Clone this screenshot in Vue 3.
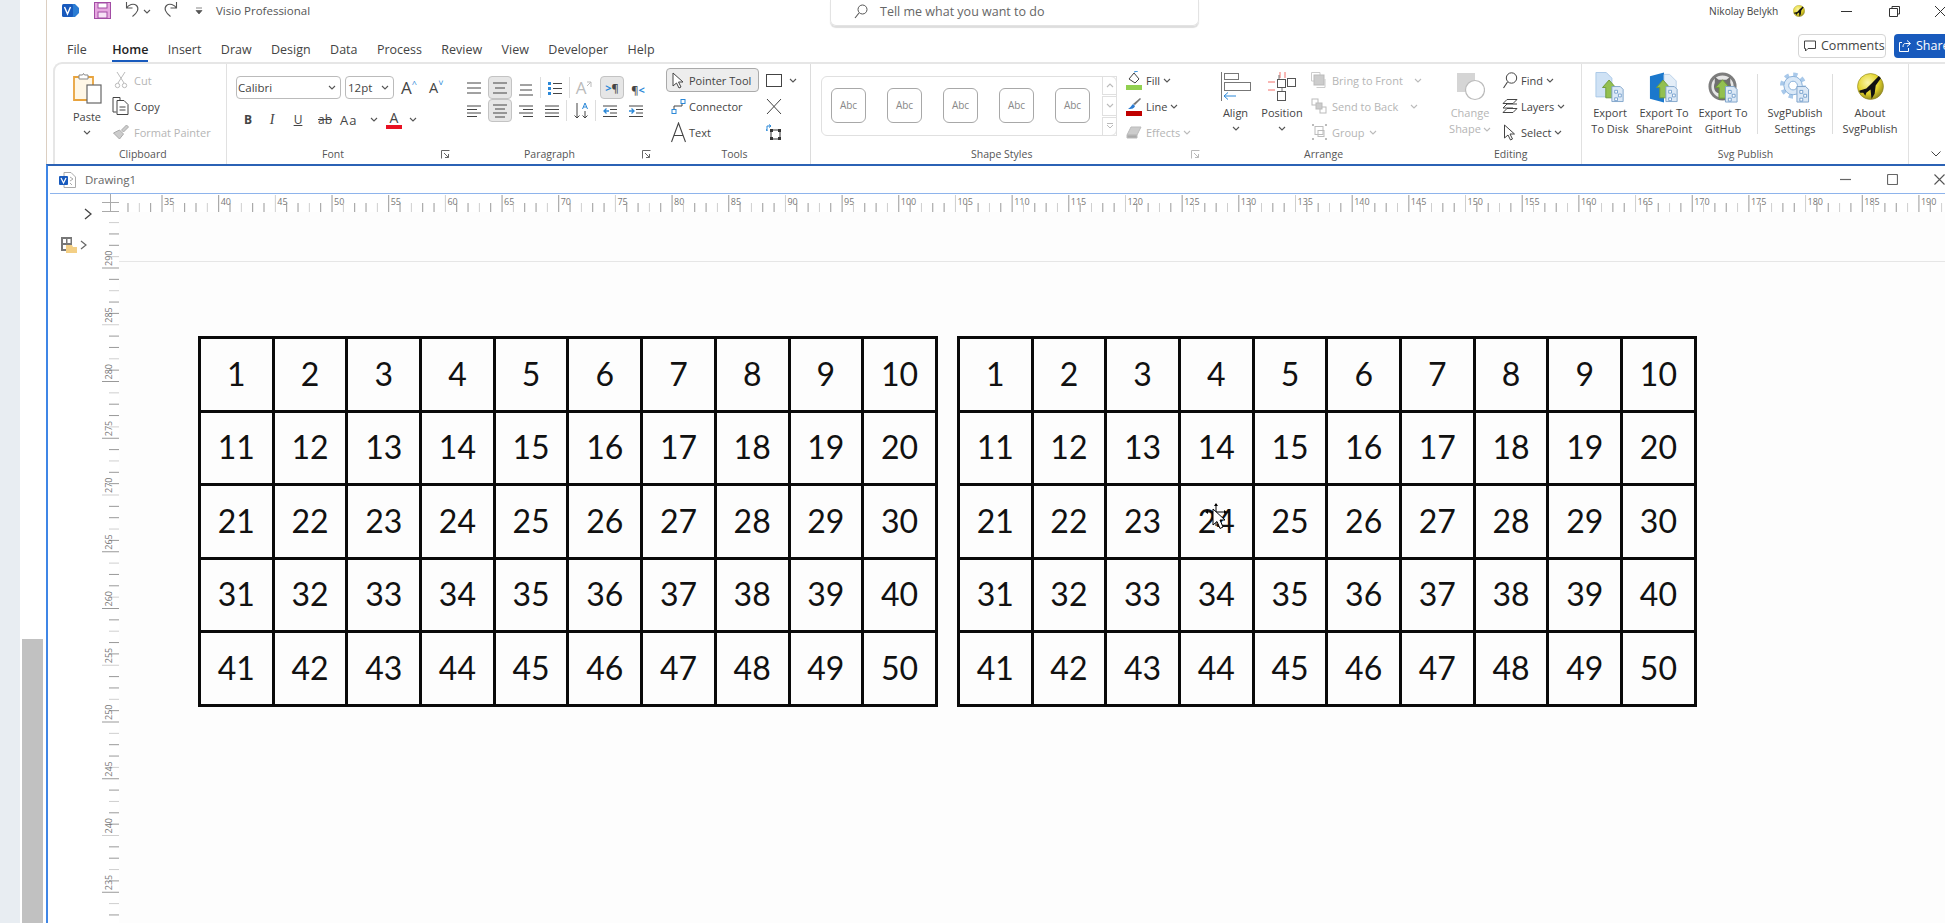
<script setup>
const tabs = ['File', 'Home', 'Insert', 'Draw', 'Design', 'Data', 'Process', 'Review', 'View', 'Developer', 'Help']
const swatches = [1, 2, 3, 4, 5]
const tables = [0, 1]
const rows = [0, 1, 2, 3, 4]
const cols = [1, 2, 3, 4, 5, 6, 7, 8, 9, 10]

const hTicks = []
for (let v = 27; v <= 192; v++) {
  const x = 60 + (v - 35) * 11.335
  if (x >= 17) hTicks.push({ v, x, major: v % 5 === 0, soft: v % 3 === 0 })
}
const vTicks = []
for (let v = 294; v >= 232; v--) {
  const y = 56 + (290 - v) * 11.35
  if (y >= 0) vTicks.push({ v, y, major: v % 5 === 0, soft: v % 3 === 0 })
}

const alignTop = [[1, 3, 15], [1, 8, 15], [1, 13, 15]]
const alignMid = [[1, 3, 15], [3, 8, 13], [1, 13, 15]]
const alignBot = [[2, 5, 14], [2, 10, 14], [1, 15, 15]]
const left = [[1, 3, 15], [1, 6.5, 11], [1, 10, 15], [1, 13.5, 11]]
const center = [[1, 2, 15], [3, 6, 13], [1, 10, 15], [3, 14, 13]]
const right = [[1, 3, 15], [5, 6.5, 15], [1, 10, 15], [5, 13.5, 15]]
const justify = [[1, 3, 15], [1, 6.5, 15], [1, 10, 15], [1, 13.5, 15]]
</script>

<template>
  <div class="screen">
    <svg class="defs" width="0" height="0" aria-hidden="true">
      <defs>
        <radialGradient id="ball" cx="40%" cy="35%" r="70%">
          <stop offset="0" stop-color="#fbf6a8" />
          <stop offset=".6" stop-color="#e2d32a" />
          <stop offset="1" stop-color="#8d8420" />
        </radialGradient>
        <symbol id="chev" viewBox="0 0 8 5"><path d="M1 1l3 3 3-3" fill="none" stroke="#555" stroke-width="1.1" /></symbol>
        <symbol id="chevg" viewBox="0 0 8 5"><path d="M1 1l3 3 3-3" fill="none" stroke="#bbb" stroke-width="1.1" /></symbol>
        <symbol id="launch" viewBox="0 0 9 9"><path d="M.5 8.500v-8h8M3 3l4.500 4.500M7.500 4v3.500H4" fill="none" stroke="#666" /></symbol>
        <symbol id="arrowdoc" viewBox="0 0 32 32">
          <path d="M8 16l7-8 7 8h-3.500v11h-7V16z" fill="#93c050" stroke="#6f9a3a" />
          <path d="M18 15h9l3 3v13H18z" fill="#dbe8f6" stroke="#7fa3c9" />
          <path d="M21 19h3v3h-3zM25 23h3v3h-3zM21 27h3v3h-3z" fill="#fff" stroke="#5c8fc4" stroke-width=".8" />
        </symbol>
        <symbol id="plane" viewBox="0 0 26 26">
          <circle cx="13" cy="13" r="12.500" fill="url(#ball)" stroke="#8d8420" stroke-width=".6" />
          <path d="M2 17l7-2 5-5 7-7 2 2-5 7-1 8-3 5-1-9-4 3-1 3-2-3-3 0z" fill="#111" />
        </symbol>
      </defs>
    </svg>

    <aside class="rail">
      <div class="strip"></div>
      <div class="track"><div class="thumb"></div></div>
    </aside>

    <main class="main">
      <section class="top">
        <header class="titlebar">
          <svg class="logo" width="17" height="15" viewBox="0 0 17 15">
            <path d="M8 1h5l4 4v5l-4 4H8z" fill="#2b7cd3" />
            <rect y="1" width="11" height="13" rx="1.500" fill="#185abd" />
            <path d="M2.500 4l3 7 3-7" fill="none" stroke="#fff" stroke-width="1.400" />
          </svg>
          <svg class="save" width="17" height="17" viewBox="0 0 17 17">
            <rect x=".5" y=".5" width="16" height="16" fill="#e6a8e0" stroke="#a24da4" />
            <rect x="4" y="1" width="9" height="5" fill="#fff" stroke="#a24da4" />
            <rect x="4" y="10" width="9" height="6" fill="#f7e3f6" stroke="#a24da4" />
          </svg>
          <svg class="undo" width="16" height="17" viewBox="0 0 16 17">
            <path d="M1.500 1v6h6M1.500 7c2-3.500 7-5 10-2.500 3 3 1 7-4 11" fill="none" stroke="#555" stroke-width="1.100" />
          </svg>
          <svg class="chev" width="8" height="5"><use href="#chev" /></svg>
          <svg class="redo" width="16" height="17" viewBox="0 0 16 17">
            <path d="M14.500 1v6h-6M14.500 7c-2-3.500-7-5-10-2.500-3 3-1 7 4 11" fill="none" stroke="#555" stroke-width="1.100" />
          </svg>
          <svg class="qat" width="8" height="8" viewBox="0 0 8 8">
            <path d="M1 1h6M1 3.500h6l-3 3.500z" fill="#555" stroke="#555" stroke-width=".7" />
          </svg>
          <span class="apptitle">Visio Professional</span>
          <div class="tellme">
            <svg width="14" height="15" viewBox="0 0 14 15">
              <circle cx="8.500" cy="5.500" r="4.500" fill="none" stroke="#555" />
              <path d="M5 9l-4 5" stroke="#555" stroke-width="1.100" />
            </svg>
            <span>Tell me what you want to do</span>
          </div>
          <span class="username">Nikolay Belykh</span>
          <svg class="avatar" width="12" height="12"><use href="#plane" /></svg>
          <svg class="win-a" width="11" height="11" viewBox="0 0 11 11"><path d="M0 5.500h11" stroke="#333" /></svg>
          <svg class="win-b" width="11" height="11" viewBox="0 0 11 11">
            <path d="M3 2V.5h7.500V8H9M.5 2.500h8v8h-8z" fill="none" stroke="#333" />
          </svg>
          <svg class="win-c" width="11" height="11" viewBox="0 0 11 11"><path d="M0 0l11 11M11 0L0 11" stroke="#333" /></svg>
        </header>

        <nav class="tabbar">
          <span v-for="t in tabs" :key="t" class="tab" :class="{ on: t === 'Home' }">{{ t }}</span>
          <div class="tab-actions">
            <button class="comments">
              <svg width="12" height="12" viewBox="0 0 12 12"><path d="M.5 1h11v7.500H4L1.500 11V8.500h-1z" fill="none" stroke="#444" /></svg>
              Comments
            </button>
            <button class="share">
              <svg width="12" height="12" viewBox="0 0 12 12">
                <path d="M8 .5l3.500 3L8 6.500M11 3.500H6.500C4.500 3.500 4 5 4 7M3 2.500H.5v9h9V8" fill="none" stroke="#fff" />
              </svg>
              Share
            </button>
          </div>
        </nav>

        <div class="ribbon">
          <!-- Clipboard -->
          <section class="group clip">
            <div class="body">
              <div class="paste">
                <svg width="29" height="31" viewBox="0 0 29 31">
                  <path d="M1 4h19v23H1z" fill="#fff7e6" stroke="#e8a33d" stroke-width="1.800" />
                  <path d="M6 2h3.500l1-1.500 1 1.500H15v4H6z" fill="#fff" stroke="#888" />
                  <rect x="14" y="12" width="14" height="18" fill="#fff" stroke="#666" stroke-width="1.200" />
                </svg>
                <span class="pastetxt">Paste</span>
                <svg class="chev" width="8" height="5"><use href="#chev" /></svg>
              </div>
              <div class="stack">
                <div class="row dim">
                  <svg width="14" height="18" viewBox="0 0 14 18">
                    <path d="M3 1l7 11M11 1L4 12" stroke="#bbb" fill="none" />
                    <circle cx="3.500" cy="14.500" r="2.200" fill="none" stroke="#bbb" />
                    <circle cx="10.500" cy="14.500" r="2.200" fill="none" stroke="#bbb" />
                  </svg>
                  <span class="mlc">Cut</span>
                </div>
                <div class="row">
                  <svg width="17" height="18" viewBox="0 0 17 18">
                    <path d="M4 15H.5V.5h7V3" fill="none" stroke="#444" />
                    <path d="M4.500 3.500h7l4 4v10h-11z" fill="#fff" stroke="#444" />
                    <path d="M7 10h6M7 13h6" stroke="#444" />
                  </svg>
                  <span class="mlc">Copy</span>
                </div>
                <div class="row dim">
                  <svg width="17" height="16" viewBox="0 0 17 16">
                    <path d="M7 6l4 4-4 5-6-6z" fill="#ccc" stroke="#aaa" />
                    <path d="M9 6l5-5 2 2-5 5z" fill="#ccc" stroke="#aaa" />
                  </svg>
                  <span class="mlc">Format Painter</span>
                </div>
              </div>
            </div>
            <div class="glabel"><span>Clipboard</span></div>
          </section>

          <!-- Font -->
          <section class="group font">
            <div class="body fcol">
              <div class="frow one">
                <div class="select w1"><span>Calibri</span><svg class="chev" width="8" height="5"><use href="#chev" /></svg></div>
                <div class="select w2"><span>12pt</span><svg class="chev" width="8" height="5"><use href="#chev" /></svg></div>
                <span class="grow">A<sup>^</sup></span>
                <span class="shrink">A<sup>˅</sup></span>
              </div>
              <div class="frow two">
                <b class="ft">B</b>
                <i class="ft ser">I</i>
                <u class="ft">U</u>
                <s class="ft">ab</s>
                <span class="case">Aa</span>
                <svg class="chev" width="8" height="5"><use href="#chev" /></svg>
                <span class="color">A</span>
                <svg class="chev" width="8" height="5"><use href="#chev" /></svg>
              </div>
            </div>
            <div class="glabel"><span>Font</span><svg class="launch" width="9" height="9"><use href="#launch" /></svg></div>
          </section>

          <!-- Paragraph -->
          <section class="group para">
            <div class="body fcol">
              <div class="frow pr1">
                <span class="slot"><svg width="16" height="16"><path v-for="l in alignTop" :key="l[1]" :d="`M${l[0]} ${l[1]}H${l[2]}`" stroke="#444" /></svg></span>
                <span class="slot act"><svg width="16" height="16"><path v-for="l in alignMid" :key="l[1]" :d="`M${l[0]} ${l[1]}H${l[2]}`" stroke="#444" /></svg></span>
                <span class="slot"><svg width="16" height="18"><path v-for="l in alignBot" :key="l[1]" :d="`M${l[0]} ${l[1]}H${l[2]}`" stroke="#444" /></svg></span>
                <i class="vd"></i>
                <span class="slot">
                  <svg width="16" height="16" viewBox="0 0 16 16">
                    <path d="M1 2h3v3H1zM1 7h3v3H1zM1 12h3v3H1z" fill="#2b88d8" />
                    <path d="M6 3.500h9M6 8.500h9M6 13.500h9" stroke="#444" />
                  </svg>
                </span>
                <i class="vd"></i>
                <span class="slot fade">A<svg width="6" height="8" viewBox="0 0 6 8"><path d="M1 1h4v5M5 1L1 5" fill="none" stroke="#bbb" /></svg></span>
                <span class="slot act shift pil"><em>&gt;</em>¶</span>
                <span class="slot pil"><span>¶</span><em>&lt;</em></span>
              </div>
              <div class="frow pr2">
                <span class="slot"><svg width="16" height="16"><path v-for="l in left" :key="l[1]" :d="`M${l[0]} ${l[1]}H${l[2]}`" stroke="#444" /></svg></span>
                <span class="slot act"><svg width="16" height="16"><path v-for="l in center" :key="l[1]" :d="`M${l[0]} ${l[1]}H${l[2]}`" stroke="#444" /></svg></span>
                <span class="slot"><svg width="16" height="16"><path v-for="l in right" :key="l[1]" :d="`M${l[0]} ${l[1]}H${l[2]}`" stroke="#444" /></svg></span>
                <span class="slot"><svg width="16" height="16"><path v-for="l in justify" :key="l[1]" :d="`M${l[0]} ${l[1]}H${l[2]}`" stroke="#444" /></svg></span>
                <i class="vd"></i>
                <span class="slot">
                  <svg width="16" height="18" viewBox="0 0 16 18">
                    <path d="M4 1v15M1.500 13.500L4 16l2.500-2.500M12 9v7M9.500 13.500L12 16l2.500-2.500" fill="none" stroke="#444" />
                    <path d="M9.500 7l2.500-6 2.500 6M10.300 5h3.400" fill="none" stroke="#2b88d8" />
                  </svg>
                </span>
                <i class="vd"></i>
                <span class="slot">
                  <svg width="16" height="16" viewBox="0 0 16 16">
                    <path d="M1 3h14M8 6.500h7M8 10h7M1 13.500h14" stroke="#444" />
                    <path d="M7 8H2M4.500 5.500L2 8l2.500 2.500" fill="none" stroke="#2b88d8" stroke-width="1.300" />
                  </svg>
                </span>
                <span class="slot">
                  <svg width="16" height="16" viewBox="0 0 16 16">
                    <path d="M1 3h14M8 6.500h7M8 10h7M1 13.500h14" stroke="#444" />
                    <path d="M1 8h5M3.500 5.500L6 8l-2.500 2.500" fill="none" stroke="#2b88d8" stroke-width="1.300" />
                  </svg>
                </span>
              </div>
            </div>
            <div class="glabel"><span>Paragraph</span><svg class="launch" width="9" height="9"><use href="#launch" /></svg></div>
          </section>

          <!-- Tools -->
          <section class="group tools">
            <div class="body">
              <div class="stack">
                <div class="row pointer">
                  <svg width="13" height="17" viewBox="0 0 13 17">
                    <path d="M1 1v13l3.500-3 2.500 5 2-1-2.500-5H11z" fill="#fff" stroke="#444" />
                  </svg>
                  <span>Pointer Tool</span>
                </div>
                <div class="row tool">
                  <svg width="15" height="15" viewBox="0 0 15 15">
                    <path d="M3 11V7h8V3" fill="none" stroke="#444" />
                    <rect x="1" y="10.500" width="4" height="4" fill="#fff" stroke="#2b88d8" />
                    <rect x="10" y=".5" width="4" height="4" fill="#fff" stroke="#2b88d8" />
                  </svg>
                  <span>Connector</span>
                </div>
                <div class="row tool">
                  <svg width="15" height="21" viewBox="0 0 15 21"><path d="M.5 20L7.500 1l7 19M3 13.500h9" fill="none" stroke="#444" stroke-width="1.100" /></svg>
                  <span>Text</span>
                </div>
              </div>
              <div class="stack tools2">
                <div class="row">
                  <svg width="16" height="13" viewBox="0 0 16 13"><rect x=".5" y=".5" width="15" height="12" fill="#fff" stroke="#444" /></svg>
                  <svg class="chev rectchev" width="8" height="5"><use href="#chev" /></svg>
                </div>
                <div class="row">
                  <svg width="16" height="17" viewBox="0 0 16 17"><path d="M1 1l14 15M15 1L1 16" stroke="#444" /></svg>
                </div>
                <div class="row">
                  <svg width="16" height="16" viewBox="0 0 16 16">
                    <rect x="5" y="6" width="9" height="9" fill="none" stroke="#333" />
                    <path d="M4 5h3v3H4zM12 5h3v3h-3zM4 13h3v3H4zM12 13h3v3h-3z" fill="#333" />
                    <path d="M1 7V2h4M3 .5L5 2 3 3.500M1 7l-1-2" fill="none" stroke="#2b88d8" />
                  </svg>
                </div>
              </div>
            </div>
            <div class="glabel"><span>Tools</span></div>
          </section>

          <!-- Shape Styles -->
          <section class="group shapes">
            <div class="body">
              <div class="gallery">
                <div v-for="s in swatches" :key="s" class="swatch">Abc</div>
                <div class="gscroll">
                  <span><svg width="8" height="5"><use href="#chevg" transform="rotate(180 4 2.500)" /></svg></span>
                  <span><svg width="8" height="5"><use href="#chevg" /></svg></span>
                  <span><svg width="8" height="6" viewBox="0 0 8 6"><path d="M1 .5h6M1 2l3 3 3-3" fill="none" stroke="#bbb" /></svg></span>
                </div>
              </div>
              <div class="stack fills">
                <div class="row">
                  <svg width="16" height="19" viewBox="0 0 16 19">
                    <path d="M3 8l5-6 5 6-4 4z" fill="#fff" stroke="#444" />
                    <path d="M8 1l4-1" stroke="#2b88d8" />
                    <rect y="14" width="16" height="5" fill="#92d050" />
                  </svg>
                  <span>Fill</span>
                  <svg class="chev" width="8" height="5"><use href="#chev" /></svg>
                </div>
                <div class="row">
                  <svg width="16" height="19" viewBox="0 0 16 19">
                    <path d="M14 1l1 1-6 6-2-1z" fill="#777" />
                    <path d="M7 7l2 2c-1 3-4 3-7 3 2-1 3-3 5-5z" fill="#2b7cd3" />
                    <rect y="14" width="16" height="5" fill="#c00000" />
                  </svg>
                  <span>Line</span>
                  <svg class="chev" width="8" height="5"><use href="#chev" /></svg>
                </div>
                <div class="row dim">
                  <svg width="16" height="15" viewBox="0 0 16 15">
                    <path d="M1 10l4-8h10l-4 8z" fill="#ccc" stroke="#bbb" />
                    <path d="M1 10h10v3H1z" fill="#aaa" stroke="#bbb" />
                  </svg>
                  <span>Effects</span>
                  <svg class="chev" width="8" height="5"><use href="#chevg" /></svg>
                </div>
              </div>
            </div>
            <div class="glabel"><span>Shape Styles</span><svg class="launch soft" width="9" height="9"><use href="#launch" /></svg></div>
          </section>

          <!-- Arrange -->
          <section class="group arrange">
            <div class="body">
              <div class="large alignb">
                <svg width="30" height="29" viewBox="0 0 30 29">
                  <path d="M.5 0v29" stroke="#777" />
                  <rect x="3.500" y="1.500" width="14" height="6" fill="#fff" stroke="#777" />
                  <rect x="3.500" y="10.500" width="26" height="8" fill="#fff" stroke="#777" />
                  <path d="M15 24H3M7 20.500L3 24l4 3.500" fill="none" stroke="#2b88d8" />
                </svg>
                <span class="ll">Align</span>
                <svg class="chev" width="8" height="5"><use href="#chev" /></svg>
              </div>
              <div class="large posb">
                <svg width="29" height="29" viewBox="0 0 29 29">
                  <path d="M12 0v6M17 0v6M0 10h7M0 18h7" stroke="#f3706a" />
                  <path d="M11 10V3M14 16v4" stroke="#777" />
                  <rect x="9.500" y="7.500" width="8" height="8" fill="#fff" stroke="#555" />
                  <rect x="19.500" y="6.500" width="8" height="8" fill="#fff" stroke="#555" />
                  <rect x="9.500" y="19.500" width="8" height="9" fill="#fff" stroke="#555" />
                </svg>
                <span class="ll">Position</span>
                <svg class="chev" width="8" height="5"><use href="#chev" /></svg>
              </div>
              <div class="stack arr">
                <div class="row dim">
                  <svg width="17" height="16" viewBox="0 0 17 16">
                    <path d="M3 9H.5V.5H9V3M14 7v8.500H5.500" fill="none" stroke="#ccc" />
                    <rect x="3" y="3" width="10" height="10" fill="#ccc" stroke="#bbb" />
                  </svg>
                  <span>Bring to Front</span>
                  <svg class="chev bf" width="8" height="5"><use href="#chevg" /></svg>
                </div>
                <div class="row dim">
                  <svg width="17" height="16" viewBox="0 0 17 16">
                    <rect x="1" y="1" width="6" height="6" fill="none" stroke="#bbb" />
                    <rect x="9" y="9" width="6" height="6" fill="none" stroke="#bbb" />
                    <rect x="5" y="5" width="6" height="6" fill="#ccc" stroke="#bbb" />
                  </svg>
                  <span>Send to Back</span>
                  <svg class="chev sb" width="8" height="5"><use href="#chevg" /></svg>
                </div>
                <div class="row dim">
                  <svg width="17" height="18" viewBox="0 0 17 18">
                    <rect x="4" y="3.500" width="8" height="8" fill="none" stroke="#bbb" />
                    <rect x="7" y="7.500" width="6" height="6" fill="none" stroke="#bbb" />
                    <path d="M1 1h2v2H1zM14 1h2v2h-2zM1 15h2v2H1zM14 15h2v2h-2z" fill="#bbb" />
                  </svg>
                  <span>Group</span>
                  <svg class="chev gp" width="8" height="5"><use href="#chevg" /></svg>
                </div>
              </div>
            </div>
            <div class="glabel"><span>Arrange</span></div>
          </section>

          <!-- Editing -->
          <section class="group editing">
            <div class="body">
              <div class="large change dim">
                <svg width="29" height="29" viewBox="0 0 29 29">
                  <rect x="1" y="1" width="18" height="19" fill="#d5d5d5" />
                  <circle cx="19" cy="18" r="9.500" fill="#fff" stroke="#bbb" stroke-width="1.200" />
                </svg>
                <span class="ll">Change</span>
                <span class="ll l2">Shape<svg class="chev" width="8" height="5"><use href="#chevg" /></svg></span>
              </div>
              <div class="stack edit">
                <div class="row">
                  <svg width="15" height="17" viewBox="0 0 15 17">
                    <circle cx="9" cy="6" r="5.200" fill="none" stroke="#444" />
                    <path d="M5 10l-4 6" stroke="#444" stroke-width="1.100" />
                  </svg>
                  <span>Find</span>
                  <svg class="chev" width="8" height="5"><use href="#chev" /></svg>
                </div>
                <div class="row">
                  <svg width="15" height="15" viewBox="0 0 15 15">
                    <path d="M.5 4.500l4-4h10l-4 4zM.5 9l4-4h10M.5 9h10M.5 13.500l4-4h10l-4 4z" fill="none" stroke="#444" />
                  </svg>
                  <span>Layers</span>
                  <svg class="chev" width="8" height="5"><use href="#chev" /></svg>
                </div>
                <div class="row">
                  <svg width="12" height="17" viewBox="0 0 13 17">
                    <path d="M1 1v13l3.500-3 2.500 5 2-1-2.500-5H11z" fill="#fff" stroke="#444" />
                  </svg>
                  <span>Select</span>
                  <svg class="chev" width="8" height="5"><use href="#chev" /></svg>
                </div>
              </div>
            </div>
            <div class="glabel"><span>Editing</span></div>
          </section>

          <!-- Svg Publish -->
          <section class="group svgpub">
            <div class="body">
              <div class="large pub w50">
                <svg width="30" height="31" viewBox="0 0 32 32">
                  <path d="M1 0h11l6 6v20H1z" fill="#cfe2f5" stroke="#a9c7e6" />
                  <use href="#arrowdoc" width="32" height="32" />
                </svg>
                <span class="ll">Export</span>
                <span class="ll">To Disk</span>
              </div>
              <div class="large pub w58">
                <svg width="30" height="31" viewBox="0 0 32 32">
                  <path d="M1 4l15-4v32L1 28z" fill="#1b78cc" />
                  <path d="M16 2h6l7 7v9H16z" fill="#e4eef8" stroke="#b7cfe8" />
                  <use href="#arrowdoc" width="32" height="32" />
                </svg>
                <span class="ll">Export To</span>
                <span class="ll">SharePoint</span>
              </div>
              <div class="large pub w60">
                <svg width="31" height="31" viewBox="0 0 32 32">
                  <circle cx="15" cy="15" r="13" fill="#e6e6e6" stroke="#7d7d7d" stroke-width="3" />
                  <path d="M7 11V5l4 3h8l4-3v6c2 5 0 10-4 11v7h-8v-7c-4-1-6-6-4-11z" fill="#6f6f6f" />
                  <use href="#arrowdoc" width="32" height="32" />
                </svg>
                <span class="ll">Export To</span>
                <span class="ll">GitHub</span>
              </div>
              <i class="pubd first"></i>
              <div class="large pub w74">
                <svg width="32" height="31" viewBox="0 0 32 32">
                  <circle cx="14" cy="14" r="11.500" fill="none" stroke="#a9c9ea" stroke-width="4" stroke-dasharray="4.500 4.500" />
                  <circle cx="14" cy="14" r="9.500" fill="#d9e8f7" stroke="#86aed8" />
                  <circle cx="14" cy="14" r="4.500" fill="#fff" stroke="#86aed8" />
                  <path d="M18 15h9l3 3v13H18z" fill="#dbe8f6" stroke="#7fa3c9" />
                  <path d="M21 19h3v3h-3zM25 23h3v3h-3zM21 27h3v3h-3z" fill="#fff" stroke="#5c8fc4" stroke-width=".8" />
                </svg>
                <span class="ll">SvgPublish</span>
                <span class="ll">Settings</span>
              </div>
              <i class="pubd"></i>
              <div class="large pub w74">
                <svg width="27" height="29"><use href="#plane" width="27" height="29" /></svg>
                <span class="ll">About</span>
                <span class="ll">SvgPublish</span>
              </div>
            </div>
            <div class="glabel"><span>Svg Publish</span></div>
          </section>
          <div class="collapse">
            <svg width="10" height="6" viewBox="0 0 10 6"><path d="M.5.5L5 5 9.500.5" fill="none" stroke="#444" /></svg>
          </div>
        </div>
      </section>

      <section class="doc">
        <header class="doctitle">
          <svg width="17" height="16" viewBox="0 0 17 16">
            <path d="M5 .5h7l4.500 4.500v10.500H5z" fill="#fff" stroke="#aaa" />
            <path d="M11 5l3 2-3 2M11 11l2 2" fill="none" stroke="#aaa" />
            <rect y="4" width="9" height="9" rx="1" fill="#185abd" />
            <path d="M2 6l2.500 5L7 6" fill="none" stroke="#fff" stroke-width="1.200" />
          </svg>
          <span class="docname">Drawing1</span>
          <div class="docwin">
            <svg width="11" height="11" viewBox="0 0 11 11"><path d="M0 5.500h11" stroke="#666" stroke-width="1.200" /></svg>
            <svg width="11" height="11" viewBox="0 0 11 11"><rect x=".5" y=".5" width="10" height="10" rx="1" fill="none" stroke="#666" stroke-width="1.200" /></svg>
            <svg width="11" height="11" viewBox="0 0 11 11"><path d="M.5.5l10 10M10.500.5l-10 10" stroke="#555" stroke-width="1.100" /></svg>
          </div>
        </header>
        <div class="docbody">
          <aside class="stencils">
            <svg class="exp" width="8" height="12" viewBox="0 0 8 12"><path d="M1 1l6 5-6 5" fill="none" stroke="#444" stroke-width="1.300" /></svg>
            <div class="stenrow">
              <svg width="16" height="16" viewBox="0 0 16 16">
                <path d="M0 0h11v14H0z" fill="#777" />
                <path d="M2 2h3v4H2zM6.500 2h3v4h-3zM2 8h3v4H2z" fill="#fff" />
                <path d="M5 8h6l1 2h4v6H5z" fill="#f3cf85" />
              </svg>
              <svg width="7" height="10" viewBox="0 0 7 10"><path d="M1 1l5 4-5 4" fill="none" stroke="#666" stroke-width="1.200" /></svg>
            </div>
          </aside>
          <div class="corner">
            <svg width="17" height="18" viewBox="0 0 17 18">
              <path d="M0 8.500h17M8.500 0v18M0 17.500h17" stroke="#aaa" />
            </svg>
          </div>
          <div class="hruler">
            <svg width="1828" height="18">
              <g v-for="t in hTicks" :key="t.v">
                <path :d="`M${t.x - 17} ${t.major ? 1 : 9}V18`" :stroke="t.soft ? '#cfcfcf' : '#999'" stroke-width="1" />
                <text v-if="t.major" :x="t.x - 15" y="11" class="rtext">{{ t.v }}</text>
              </g>
            </svg>
          </div>
          <div class="vruler">
            <svg width="17" height="711">
              <g v-for="t in vTicks" :key="t.v">
                <path :d="`M${t.major ? 0 : 7} ${t.y}H17`" :stroke="t.soft ? '#cfcfcf' : '#999'" stroke-width="1" />
                <text v-if="t.major" :transform="`translate(10 ${t.y - 2}) rotate(-90)`" class="rtext">{{ t.v }}</text>
              </g>
            </svg>
          </div>
          <div class="canvas">
            <div class="pagetop"></div>
            <div class="tables">
              <div v-for="tb in tables" :key="tb" class="grid">
                <template v-for="r in rows" :key="r">
                  <div v-for="c in cols" :key="c" class="cell">
                    {{ r * 10 + c }}
                    <svg v-if="tb === 1 && r * 10 + c === 24" class="cursor" width="22" height="30" viewBox="0 0 22 30">
                      <path d="M11 1v22M3 9h16" stroke="#000" stroke-width="1" />
                      <path d="M11 0l2 3H9zM0 9l3-2v4zM22 9l-3-2v4z" fill="#000" />
                      <path d="M8 6v16l4-3.500 3 7 3-1.500-3-7h5z" fill="#fff" stroke="#000" stroke-width="1" />
                    </svg>
                  </div>
                </template>
              </div>
            </div>
          </div>
        </div>
      </section>
    </main>
  </div>
</template>

<style>
html, body { margin: 0; background: #fff; overflow: hidden; }
</style>

<style scoped>
.screen { display: flex; width: 1945px; height: 923px; overflow: hidden; position: relative; background: #fff; font: 11px "Open Sans", sans-serif; color: #444; }
.defs { position: absolute; }
svg { display: block; flex: none; }
.rail { width: 46px; flex: none; display: flex; }
.strip { width: 20px; background: #e8edf2; }
.track { flex: 1; display: flex; flex-direction: column; justify-content: flex-end; padding-left: 2px; }
.thumb { width: 21px; height: 284px; background: #c1c1c1; }
.main { width: 1899px; flex: none; display: flex; flex-direction: column; }
.top { height: 164px; flex: none; border-left: 1px solid #dccfc2; box-sizing: border-box; }

.titlebar { height: 27px; display: flex; align-items: flex-start; }
.titlebar > * { flex: none; }
.titlebar > svg, .titlebar > span { margin-top: 3px; }
.logo { margin-left: 15px; }
.save { margin-left: 15px; margin-top: 2px !important; }
.undo { margin-left: 14px; margin-top: 1px !important; }
.titlebar .chev { margin-left: 2px; margin-top: 9px; }
.redo { margin-left: 11px; margin-top: 1px !important; }
.qat { margin-left: 17px; margin-top: 7px !important; }
.apptitle { margin-left: 13px; font-size: 11.500px; line-height: 16px; color: #555; white-space: nowrap; }
.tellme { margin-left: 520px; width: 369px; height: 26px; box-sizing: border-box; border: 1px solid #e3e3e3; border-top: 0; border-radius: 0 0 6px 6px; box-shadow: 0 2px 1px #ddd; display: flex; align-items: flex-start; padding: 4px 0 0 23px; gap: 12px; font-size: 12.500px; line-height: 15px; color: #666; }
.username { margin-left: 510px; font-size: 10.200px; line-height: 16px; color: #444; white-space: nowrap; }
.avatar { margin-left: 15px; margin-top: 5px !important; }
.win-a { margin-left: 36px; margin-top: 6px !important; }
.win-b { margin-left: 37px; margin-top: 6px !important; }
.win-c { margin-left: 35px; margin-top: 6px !important; }

.tabbar { height: 35px; display: flex; align-items: center; gap: 19.400px; padding-left: 20px; box-sizing: border-box; padding-top: 10px; }
.tab { font-size: 12.500px; line-height: 20px; color: #444; position: relative; white-space: nowrap; }
.tab:first-child { margin-right: 6px; }
.tab.on { color: #222; font-weight: 600; }
.tab.on::after { content: ""; position: absolute; left: 0; right: 0; bottom: -2px; height: 2px; background: #185abd; }
.tab-actions { margin-left: auto; display: flex; gap: 8px; }
.comments, .share { height: 24px; box-sizing: border-box; font: 12.500px "Open Sans", sans-serif; display: flex; align-items: center; gap: 5px; border-radius: 4px; margin-top: -8px; white-space: nowrap; }
.comments { width: 88px; padding: 0 0 0 5px; background: #fff; border: 1px solid #d5d5d5; color: #444; }
.share { width: 58px; margin-right: -7px; padding: 0 0 0 5px; background: #185abd; border: 0; color: #fff; border-radius: 4px 0 0 4px; }

.ribbon { height: 102px; margin-left: 6px; box-sizing: border-box; border-top: 2px solid #e6e6e6; border-left: 2px solid #e6e6e6; border-top-left-radius: 9px; display: flex; }
.group { flex: none; display: flex; flex-direction: column; position: relative; }
.body { height: 81px; display: flex; align-items: flex-start; box-sizing: border-box; padding-top: 3px; }
.glabel { height: 18px; display: flex; align-items: center; justify-content: center; font-size: 10.500px; color: #555; }
.launch { margin-left: auto; }
.soft { opacity: .45; }
.stack { display: grid; grid-auto-rows: 26px; }
.row { display: flex; align-items: center; white-space: nowrap; color: #444; font-size: 11px; }
.dim, .dim .ll { color: #b5b5b5; }
.chev { flex: none; }

.group.clip { width: 172px; box-shadow: inset -1px 0 #e1e1e1; }
.clip .body { padding-left: 17px; }
.clip .glabel { justify-content: flex-start; padding-left: 64px; }
.paste { width: 30px; display: flex; flex-direction: column; align-items: center; padding-top: 6px; }
.pastetxt { margin-top: 5px; font-size: 11px; line-height: 16px; }
.paste .chev { margin-top: 5px; }
.clip .stack { margin-left: 10px; }
.mlc { margin-left: 4px; }
.clip .row svg { width: 18px; }

.group.font { width: 232px; }
.fcol { display: block; padding: 12px 0 0 9px; }
.frow { display: flex; align-items: center; height: 23px; }
.two { margin-top: 9px; }
.select { height: 23px; box-sizing: border-box; border: 1px solid #bbb; border-radius: 4px; display: flex; align-items: center; justify-content: space-between; padding: 0 4px 0 1px; font-size: 11.500px; color: #444; }
.w1 { width: 105px; }
.w2 { width: 49px; margin-left: 4px; padding-left: 2px; }
.grow { margin-left: 7px; font-size: 17px; line-height: 20px; width: 28px; }
.shrink { font-size: 14.500px; line-height: 20px; }
.grow sup, .shrink sup { font-size: 9px; color: #2b88d8; vertical-align: 7px; line-height: 0; }
.ft { width: 24px; text-align: center; font-size: 12px; color: #444; flex: none; }
.ser { font-family: "Liberation Serif", serif; font-size: 14px; }
.two .ft:nth-child(3) { margin: 0 2px; }
.two .ft:nth-child(4) { margin-left: 1px; }
.case { margin-left: 3px; font-size: 13px; letter-spacing: 1px; width: 28px; }
.two .chev { margin-left: 2px; }
.color { margin-left: 8px; width: 16px; text-align: center; font-size: 14px; line-height: 15px; border-bottom: 4px solid #e81123; }
.color + .chev { margin-left: 7px; }
.font .glabel { justify-content: flex-start; padding: 0 9px 0 95px; }

.group.para { width: 199px; }
.para .fcol { padding-left: 3px; }
.slot { width: 24px; height: 23px; flex: none; display: flex; align-items: center; justify-content: center; box-sizing: border-box; margin-right: 2px; border-radius: 4px; }
.act { background: #e6e6e6; border: 1px solid #c3c3c3; }
.pr1 .act + .slot { margin-top: 3px; }
.vd { width: 1px; height: 21px; background: #ddd; margin: 0 2px 0 0; flex: none; }
.fade { color: #bbb; font-size: 17px; font-style: normal; align-items: flex-end; }
.fade svg { margin-bottom: 10px; }
.pil { font-size: 11px; font-weight: 600; color: #444; }
.pil em { color: #2b88d8; font-style: normal; font-weight: 700; }
.shift { margin-left: 2px; }
.para .glabel { justify-content: flex-start; padding: 0 7px 0 65px; }

.group.tools { width: 153px; box-shadow: inset -1px 0 #dcdcdc; }
.tools .body { padding-left: 8px; }
.tools .stack:first-child { width: 93px; }
.tools .row { padding-left: 5px; }
.pointer { height: 24px; margin-top: 1px; box-sizing: border-box; background: #ededed; border: 1px solid #aaa; border-radius: 4px; gap: 4px; padding-left: 5px; }
.tool { gap: 3px; }
.tools2 { margin-left: 2px; }
.rectchev { margin-left: 7px; }

.group.shapes { width: 400px; }
.shapes .body { padding-left: 10px; }
.gallery { width: 296px; height: 60px; margin-top: 9px; box-sizing: border-box; border: 1px solid #e0e0e0; border-radius: 6px; display: flex; align-items: center; padding: 0 0 2px 9px; gap: 21px; }
.swatch { width: 35px; height: 35px; box-sizing: border-box; border: 1px solid #a8a8a8; border-radius: 6px; display: flex; align-items: center; justify-content: center; font-size: 10px; color: #888; }
.gscroll { margin: -1px -1px -3px auto; width: 15px; align-self: stretch; display: grid; grid-template-rows: 1fr 1fr 1fr; gap: 1px; }
.gscroll span { border: 1px solid #e0e0e0; display: flex; align-items: center; justify-content: center; }
.gallery .swatch:nth-child(5) { margin-right: -9px; }
.fills { margin-left: 9px; }
.fills .row span { margin: 0 3px 0 4px; }
.shapes .glabel { justify-content: flex-start; padding: 0 11px 0 160px; }

.large { display: flex; flex-direction: column; align-items: center; padding-top: 5px; flex: none; }
.ll { font-size: 11px; line-height: 16px; white-space: nowrap; color: #444; }
.large > svg:first-child { height: 29px; margin-bottom: 4px; }
.large .chev { margin-top: 5px; }

.group.arrange { width: 235px; }
.arrange .body { padding-left: 9px; }
.alignb { width: 31px; }
.posb { width: 42px; margin-left: 10px; }
.arr { margin-left: 8px; }
.arr .row span { margin-left: 4px; }
.bf { margin-left: 11px; }
.sb { margin-left: 12px; }
.gp { margin-left: 4px; }
.arrange .glabel { justify-content: flex-start; padding-left: 93px; }

.group.editing { width: 136px; box-shadow: inset -1px 0 #e1e1e1; }
.change { width: 48px; }
.l2 { display: flex; align-items: center; gap: 2px; }
.l2 .chev { margin: 0; }
.edit { margin-left: 8px; }
.edit .row svg:first-child { width: 16px; }
.edit .row span { margin: 0 3px 0 3px; }
.editing .glabel { justify-content: flex-start; padding-left: 48px; }

.group.svgpub { width: 327px; box-shadow: inset -1px 0 #e1e1e1; }
.svgpub .body { padding-left: 3px; }
.pub > svg:first-child { height: 31px !important; margin-bottom: 2px !important; }
.w50 { width: 50px; }
.w58 { width: 58px; }
.w60 { width: 60px; }
.w74 { width: 74px; }
.pubd { width: 1px; height: 60px; margin: 7px 0 0; background: #ddd; flex: none; }
.pubd.first { margin-left: 4px; }
.collapse { flex: 1; display: flex; align-items: flex-end; justify-content: center; padding: 0 0 7px 18px; overflow: hidden; }

.doc { flex: 1; min-height: 0; display: flex; flex-direction: column; box-sizing: border-box; border-top: 2px solid #2b62b5; border-left: 2px solid #3f86e6; }
.doctitle { height: 27px; flex: none; box-sizing: border-box; display: flex; align-items: center; padding-left: 11px; }
.docname { margin-left: 9px; font-size: 11.500px; color: #666; }
.docwin { margin-left: auto; display: flex; gap: 36px; }
.docbody { flex: 1; min-height: 0; display: grid; grid-template-columns: 52px 17px 1fr; grid-template-rows: 18px 1fr; border-top: 1px solid #8eb4ec; margin-left: 2px; }
.stencils { grid-row: 1 / 3; margin-left: -2px; display: flex; flex-direction: column; align-items: flex-start; padding: 14px 0 0 0; }
.exp { margin-left: 36px; }
.stenrow { display: flex; align-items: center; gap: 3px; margin: 17px 0 0 13px; }
.corner, .hruler, .vruler { overflow: hidden; }
.rtext { font: 9px "Open Sans", sans-serif; fill: #777; }
.canvas { background: #fdfdfd; min-width: 0; overflow: hidden; }
.pagetop { height: 49px; border-bottom: 1px solid #e6e6e6; }
.tables { display: flex; gap: 19px; margin: 74px 0 0 79px; }
.grid { display: grid; grid-template-columns: repeat(10, 70.700px); grid-auto-rows: 70.500px; gap: 3px; padding: 3px; background: #0a0a0a; flex: none; }
.cell { background: #fdfdfd; position: relative; display: flex; align-items: center; justify-content: center; box-sizing: border-box; padding-bottom: 2px; font: 32px Lato, sans-serif; color: #111; }
.cursor { position: absolute; left: 24px; top: 17px; }
</style>
